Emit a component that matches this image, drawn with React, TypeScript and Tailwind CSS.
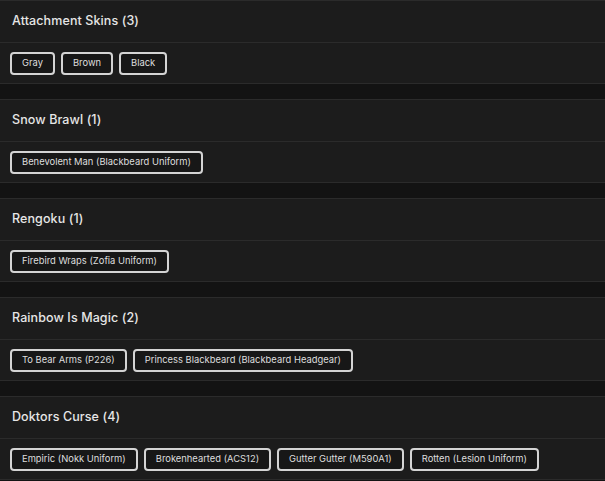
const sections: { title: string; items: string[] }[] = [
  { title: "Attachment Skins (3)", items: ["Gray", "Brown", "Black"] },
  { title: "Snow Brawl (1)", items: ["Benevolent Man (Blackbeard Uniform)"] },
  { title: "Rengoku (1)", items: ["Firebird Wraps (Zofia Uniform)"] },
  { title: "Rainbow Is Magic (2)", items: ["To Bear Arms (P226)", "Princess Blackbeard (Blackbeard Headgear)"] },
  {
    title: "Doktors Curse (4)",
    items: ["Empiric (Nokk Uniform)", "Brokenhearted (ACS12)", "Gutter Gutter (M590A1)", "Rotten (Lesion Uniform)"],
  },
];

export default function App() {
  return (
    <div className="w-[605px] h-[481px] bg-[#131313] flex flex-col gap-[15px] overflow-hidden font-['Inter',sans-serif]">
      {sections.map((s) => (
        <div key={s.title} className="bg-[#1c1c1c] border-y border-[#2b2b2b]">
          <div className="h-[42px] flex items-center px-3 border-b border-[#2b2b2b]">
            <h3 className="text-[12.5px] font-medium text-[#e6e6e6] tracking-[0.1px]">{s.title}</h3>
          </div>
          <div className="h-[40px] flex items-center gap-[6px] px-[10px] pt-px">
            {s.items.map((item) => (
              <span
                key={item}
                className="h-[23px] flex items-center px-[10px] border-2 border-[#d4d4d4] rounded-[4px] bg-[#171717] text-[9.4px] text-[#dedede] whitespace-nowrap"
              >
                {item}
              </span>
            ))}
          </div>
        </div>
      ))}
    </div>
  );
}
